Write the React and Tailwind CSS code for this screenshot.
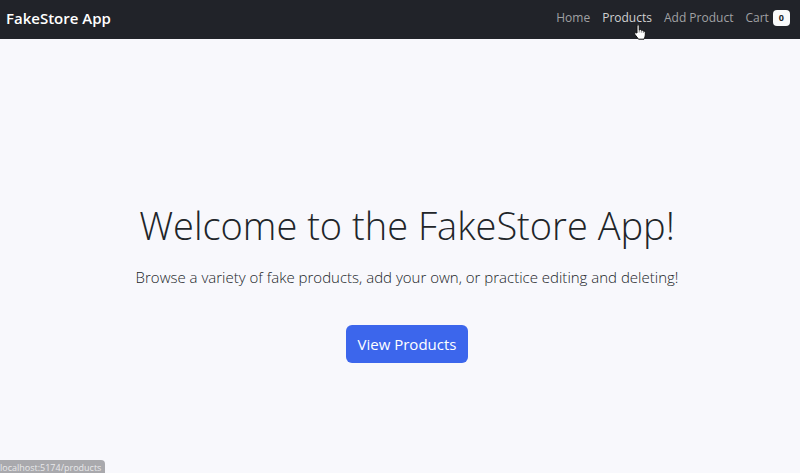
export default function App() {
  return (
    <div className="relative flex min-h-screen flex-col bg-[#f8f8fc] font-['Open_Sans','Noto_Sans',sans-serif] text-[#212529]">
      <nav className="flex h-[39px] items-center justify-between bg-[#212329] pr-[10px] pb-[3px] pl-[6px]">
        <a href="#home" className="text-[15px] leading-5 font-semibold text-white">FakeStore App</a>
        <div className="flex items-center gap-3 text-[12px] leading-5 text-[#a0a1a4]">
          <a href="#home">Home</a>
          <a href="#products" className="relative text-[#d0d0d2]">
            Products
            <svg className="absolute top-4 left-8 h-4 w-3" viewBox="0 0 12 16" fill="white" stroke="#111" strokeWidth="1" aria-hidden="true">
              <path d="M3 9V2Q3 .6 4.1 .6T5.2 2V6Q6.8 5 7.3 6.3Q8.8 5.6 9.3 7Q11.3 6.5 11.3 8.5V11Q11.2 13 10 15.2H4.5L.8 10.3Q.2 8.8 1.6 8.6Z" />
              <path d="M5.2 6V8.5M7.3 6.5V8.7M9.3 7V9" fill="none" strokeWidth=".5" />
            </svg>
          </a>
          <a href="#add">Add Product</a>
          <a href="#cart" className="flex items-center gap-1">
            Cart <span className="rounded bg-[#f8f9fa] px-[6px] text-[9px] leading-4 font-bold text-[#212529]">0</span>
          </a>
        </div>
      </nav>
      <main className="flex flex-1 flex-col items-center pt-[156px] pl-[14px] text-center">
        <h1 className="text-[38px] leading-[60px] font-light whitespace-nowrap">Welcome to the FakeStore App!</h1>
        <p className="mt-[10px] text-[15px] leading-6 font-light whitespace-nowrap">Browse a variety of fake products, add your own, or practice editing and deleting!</p>
        <button className="mt-9 h-[38px] rounded-md bg-[#3c66ec] px-3 text-[15px] text-white">View Products</button>
      </main>
      <div className="absolute bottom-0 left-0 h-[13px] overflow-hidden rounded-tr bg-[#a9a9ad] pr-1 text-[9px] leading-[15px] text-[#e8e8ea]">localhost:5174/products</div>
    </div>
  );
}
